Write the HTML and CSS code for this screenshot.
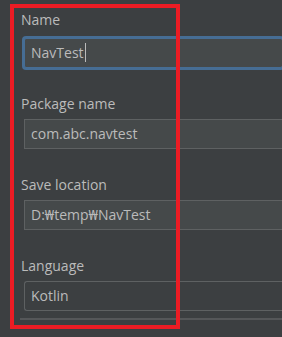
FILE: index.html
```html
<!DOCTYPE html>
<html lang="en">

<head>
    <meta charset="UTF-8">
    <title>New Project</title>
    <link rel="stylesheet" href="styles.css">
</head>

<body>
    <div class="panel">
        <div class="group">
            <div class="lbl">Name</div>
            <div class="fld focus">NavTest<span class="caret"></span></div>
        </div>
        <div class="group">
            <div class="lbl">Package name</div>
            <div class="fld">com.abc.navtest</div>
        </div>
        <div class="group">
            <div class="lbl">Save location</div>
            <div class="fld">D:₩temp₩NavTest</div>
        </div>
        <div class="group">
            <div class="lbl">Language</div>
            <div class="fld combo">Kotlin</div>
        </div>
        <div class="sep"></div>
    </div>

    <!-- red highlight box drawn over the form -->
    <div class="mark"></div>
</body>

</html>
```

FILE: styles.css
```css
html,
body {
    margin: 0;
    height: 100%;
    background-color: #3c3f41;
    overflow: hidden;
}

body {
    position: relative;
    font-family: "Open Sans", "Noto Sans", sans-serif;
    font-size: 14px;
    color: #bbbbbb;
}

.panel {
    display: flex;
    flex-direction: column;
    padding: 10px 0 0 20px;
}

.group {
    display: flex;
    flex-direction: column;
    margin-bottom: 26px;
}

.group:nth-child(4) {
    margin-bottom: 7px;
}

.lbl {
    margin-left: 1px;
    height: 19px;
    line-height: 19px;
}

.fld {
    margin: 6px 0 0 4px;
    height: 28px;
    line-height: 28px;
    padding-left: 6px;
    background-color: #45494a;
    border: 1px solid #5e6162;
    border-right: 0;
    white-space: nowrap;
}

.focus {
    margin-top: 9px;
    border-color: #466d94;
    box-shadow: 0 0 0 2px #466d94;
    border-radius: 2px;
}

.caret {
    display: inline-block;
    width: 1px;
    height: 19px;
    margin-left: 1px;
    vertical-align: -4px;
    background-color: #bbbbbb;
}

.combo {
    background-color: #3c3f41;
    border-radius: 3px 0 0 3px;
}

.sep {
    height: 2px;
    background-color: #555759;
}

.mark {
    position: absolute;
    left: 10px;
    top: 4px;
    width: 162px;
    height: 317px;
    border: 4px solid #ec1c24;
}
```
